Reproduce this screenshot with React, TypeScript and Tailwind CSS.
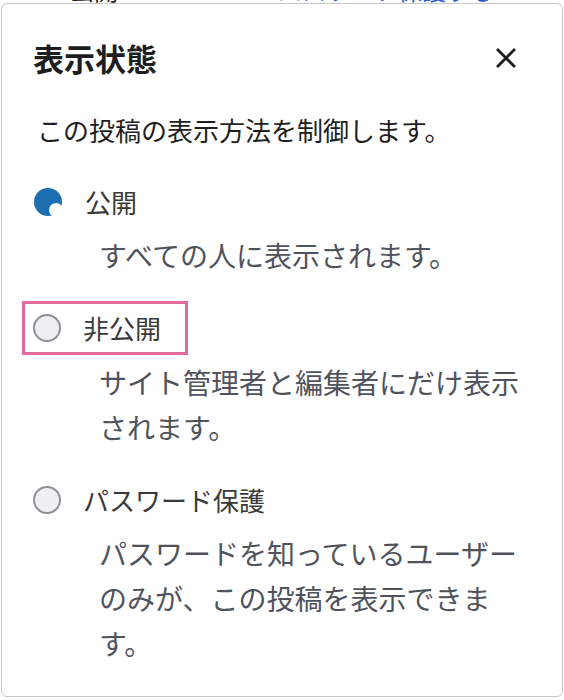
import React from "react";

const jp = "font-['Hiragino_Sans','Noto_Sans_CJK_JP',sans-serif]";

const Radio: React.FC<{ checked?: boolean }> = ({ checked }) =>
  checked ? (
    <svg width="30" height="30" viewBox="0 0 30 30" className="shrink-0">
      <circle cx="15" cy="15" r="14" fill="#1e6fb0" />
      <circle cx="23" cy="23" r="7" fill="#ffffff" />
    </svg>
  ) : (
    <span className="block w-[28px] h-[28px] shrink-0 rounded-full border-2 border-[#8f9096] bg-[#efeff2]" />
  );

interface OptionProps {
  label: string
  desc: string
  checked?: boolean
  highlight?: boolean
  first?: boolean
}

const Option: React.FC<OptionProps> = ({ label, desc, checked, highlight, first }) => (
  <div className={first ? "mt-[36px]" : "mt-[32px]"}>
    <div
      className={
        highlight
          ? "inline-flex items-center -ml-[11px] -my-[9px] py-[6px] pl-[8px] pr-[24px] border-[3px] border-[#e2699c]"
          : "flex items-center"
      }
    >
      <Radio checked={checked} />
      <span className="ml-[22px] text-[26px] leading-[36px] text-[#3a3a3a]">{label}</span>
    </div>
    <p className="mt-[13px] ml-[66px] w-[430px] text-[28px] leading-[45px] text-[#50535c]">{desc}</p>
  </div>
);

export default function App() {
  return (
    <div className={`relative w-[564px] h-[700px] bg-white overflow-hidden ${jp}`}>
      {/* page behind the popover, cut off at the top */}
      <div className="h-[3px] overflow-hidden">
        <div className="flex -mt-[24px] h-[27px] items-end text-[24px] leading-[27px]">
          <span className="ml-[70px] text-[#222]">公開</span>
          <span className="ml-[160px] text-[#2a5cc9]">パスワード保護する</span>
        </div>
      </div>

      <div className="mx-[1px] h-[694px] rounded-[6px] border-[1.5px] border-[#c8c8cc] bg-white pl-[31px] pr-[31px]">
        <div className="flex items-center justify-between pt-[32px]">
          <h1 className="text-[31px] leading-[44px] font-bold text-[#1e1e1e]">表示状態</h1>
          <button className="mr-[10px] w-[30px] h-[30px] flex items-center justify-center">
            <svg width="20" height="20" viewBox="0 0 20 20">
              <path d="M2 2 L18 18 M18 2 L2 18" stroke="#1e1e1e" strokeWidth="2.8" strokeLinecap="square" />
            </svg>
          </button>
        </div>

        <p className="mt-[32px] ml-[4px] text-[26px] leading-[36px] text-[#1e1e1e]">
          この投稿の表示方法を制御します。
        </p>

        <Option first checked label="公開" desc="すべての人に表示されます。" />
        <Option highlight label="非公開" desc="サイト管理者と編集者にだけ表示されます。" />
        <Option label="パスワード保護" desc="パスワードを知っているユーザーのみが、この投稿を表示できます。" />
      </div>
    </div>
  );
}
